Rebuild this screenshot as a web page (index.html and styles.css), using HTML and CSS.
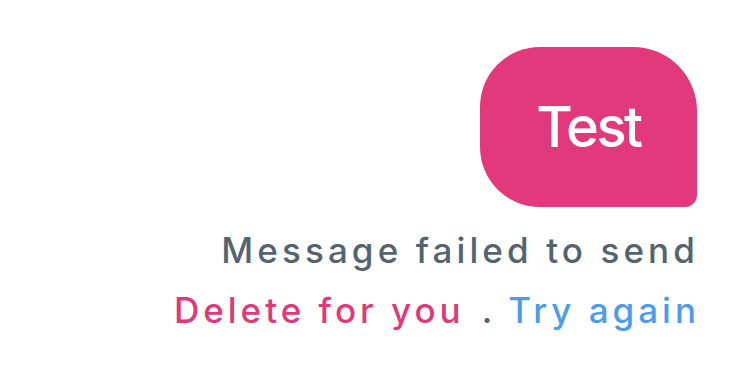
FILE: index.html
```html
<!DOCTYPE html>
<html lang="en">
<head>
<meta charset="utf-8">
<link rel="stylesheet" href="styles.css">
</head>
<body>
<div class="thread">
  <div class="bubble"><span class="bubble-text">Test</span></div>
  <div class="status">
    <div class="status-line">Message failed to send</div>
    <div class="actions">
      <span class="action delete">Delete for you</span>
      <span class="sep">.</span>
      <span class="action retry">Try again</span>
    </div>
  </div>
</div>
</body>
</html>
```
FILE: styles.css
```css
html, body {
  margin: 0;
  padding: 0;
  background: #ffffff;
}
body {
  width: 738px;
  height: 390px;
  overflow: hidden;
  font-family: Inter, "Liberation Sans", sans-serif;
}
.thread {
  display: flex;
  flex-direction: column;
  align-items: flex-end;
  padding: 47px 41px 0 0;
}
.bubble {
  width: 217px;
  height: 160px;
  box-sizing: border-box;
  background: #e1397b;
  border-radius: 60px 64px 12px 60px;
  display: flex;
  align-items: center;
  justify-content: center;
}
.bubble-text {
  color: #ffffff;
  font-size: 56px;
  font-weight: 500;
  line-height: 1;
  letter-spacing: -2.5px;
}
.status {
  display: flex;
  flex-direction: column;
  align-items: flex-end;
  margin-top: 13px;
}
.status-line {
  color: #536471;
  font-size: 35px;
  font-weight: 500;
  line-height: 60px;
  letter-spacing: 4.1px;
  margin-right: -2px;
}
.actions {
  display: flex;
  align-items: baseline;
  font-size: 35px;
  font-weight: 500;
  line-height: 60px;
}
.action {
  letter-spacing: 4px;
}
.delete { color: #e0397a; }
.retry { color: #4c9ceb; margin-right: -3px; }
.sep {
  color: #536471;
  margin: 0 16px 0 17px;
}
```
